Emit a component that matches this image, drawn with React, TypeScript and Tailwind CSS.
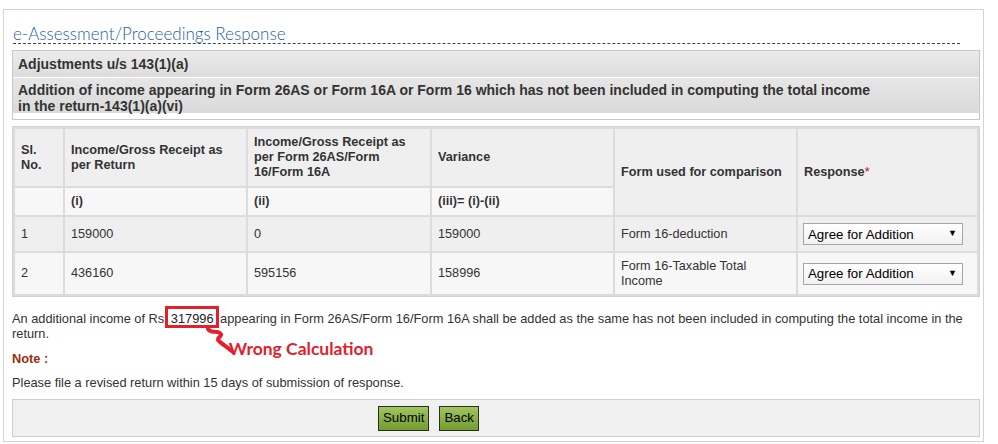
import React from "react";

const th = "px-[6px] align-middle text-left font-bold";
const td = "px-[6px] align-middle";

function ResponseSelect() {
  return (
    <div className="relative h-[22px] w-[160px]">
      <select
        defaultValue="agree"
        className="h-full w-full appearance-none rounded-none border border-[#a5a5a5] bg-linear-to-b from-white to-[#f1f1f1] pl-[4px] text-[13.3px] text-black outline-none"
      >
        <option value="agree">Agree for Addition</option>
        <option value="disagree">Disagree for Addition</option>
      </select>
      <span className="pointer-events-none absolute right-[6px] top-[5px] text-[9px] leading-[10px] text-black">▼</span>
    </div>
  );
}

export default function App() {
  return (
    <div className="font-['Liberation_Sans',Arial,sans-serif] text-[#333]">
      <div className="ml-[3px] mt-[9px] w-[981px] border border-[#d4d4d4] bg-white pb-[4px] pl-[8px] pr-[3px] pt-[15px]">
        <div className="ml-[1px] mr-[20px] border-b border-dashed border-[#444]">
          <h1 className="font-['Lato',sans-serif] text-[17px] font-light leading-[18px] text-[#1d5fa5]">
            e-Assessment/Proceedings Response
          </h1>
        </div>

        <div className="mt-[6px] border border-[#c8c8c8] text-[14px] font-bold text-[#333]">
          <div className="flex h-[27px] items-center border-b border-white bg-linear-to-b from-[#ececec] to-[#dcdcdc] pl-[5px]">
            Adjustments u/s 143(1)(a)
          </div>
          <div className="h-[35px] bg-linear-to-b from-[#e6e6e6] to-[#dadada] pl-[5px] pt-[4px] leading-[16px]">
            Addition of income appearing in Form 26AS or Form 16A or Form 16 which has not been included in computing the total income
            <br />
            in the return-143(1)(a)(vi)
          </div>
          <div className="h-[6px] bg-white" />
        </div>

        <table className="mt-[6px] w-[968px] table-fixed border-separate border-spacing-[2px] border border-[#d2d2d2] bg-[#dcdcdc] text-[12.7px] leading-[15px] text-[#333]">
          <colgroup>
            <col className="w-[48px]" />
            <col className="w-[181px]" />
            <col className="w-[182px]" />
            <col className="w-[181px]" />
            <col className="w-[181px]" />
            <col className="w-[179px]" />
          </colgroup>
          <thead>
            <tr className="h-[57px] bg-[#efefef]">
              <th className={th}>
                Sl.
                <br />
                No.
              </th>
              <th className={th}>Income/Gross Receipt as per Return</th>
              <th className={th}>Income/Gross Receipt as per Form 26AS/Form 16/Form 16A</th>
              <th className={th}>Variance</th>
              <th rowSpan={2} className={th}>
                Form used for comparison
              </th>
              <th rowSpan={2} className={th}>
                Response<span className="font-normal text-[#d0021b]">*</span>
              </th>
            </tr>
            <tr className="h-[27px] bg-[#f7f7f7]">
              <th className={th}></th>
              <th className={th}>(i)</th>
              <th className={th}>(ii)</th>
              <th className={th}>(iii)= (i)-(ii)</th>
            </tr>
          </thead>
          <tbody>
            <tr className="h-[34px] bg-[#efefef]">
              <td className={td}>1</td>
              <td className={td}>159000</td>
              <td className={td}>0</td>
              <td className={td}>159000</td>
              <td className={td}>Form 16-deduction</td>
              <td className="pl-[5px] align-middle">
                <ResponseSelect />
              </td>
            </tr>
            <tr className="h-[41px] bg-[#f7f7f7]">
              <td className={td}>2</td>
              <td className={td}>436160</td>
              <td className={td}>595156</td>
              <td className={td}>158996</td>
              <td className={td}>
                Form 16-Taxable Total
                <br />
                Income
              </td>
              <td className="pl-[5px] align-middle">
                <ResponseSelect />
              </td>
            </tr>
          </tbody>
        </table>

        <p className="mt-[14px] text-[12.8px] leading-[15px] text-[#333]">
          An additional income of Rs{" "}
          <span className="relative ml-[3px] mr-[3px] text-[#222]">
            317996
            <span className="pointer-events-none absolute -left-[6px] -right-[5px] -top-[5px] -bottom-[2px] border-[3px] border-[#e4202c]" />
            <svg
              className="pointer-events-none absolute left-[34px] top-[16px] overflow-visible"
              width="32"
              height="30"
              viewBox="0 0 32 30"
            >
              <path
                d="M3 2 C6 7 11 3 15 6 C19 9 10 11 14 14 C17 17 22 20 28 25"
                fill="none"
                stroke="#e4202c"
                strokeWidth="4"
                strokeLinecap="round"
                strokeLinejoin="round"
              />
            </svg>
            <span className="pointer-events-none absolute left-[58px] top-[28px] whitespace-nowrap font-['Lato',sans-serif] text-[17.5px] font-bold leading-[20px] text-[#e4202c]">
              Wrong Calculation
            </span>
          </span>{" "}
          appearing in Form 26AS/Form 16/Form 16A shall be added as the same has not been included in computing the total income in the
          <br />
          return.
        </p>

        <p className="mt-[10px] text-[12.8px] font-bold leading-[15px] text-[#9c2f0c]">Note :</p>

        <p className="mt-[9px] text-[12.8px] leading-[15px] text-[#333]">
          Please file a revised return within 15 days of submission of response.
        </p>

        <div className="mt-[9px] flex h-[38px] w-[968px] items-center gap-[10px] border border-[#cfcfcf] bg-[#f0f0f0] pl-[365px]">
          <button className="h-[25px] border border-[#2b2b2b] bg-linear-to-b from-[#a0c65c] to-[#729d2e] px-[4px] text-[13.3px] text-black">
            Submit
          </button>
          <button className="h-[25px] border border-[#2b2b2b] bg-linear-to-b from-[#a0c65c] to-[#729d2e] px-[4px] text-[13.3px] text-black">
            Back
          </button>
        </div>
      </div>
    </div>
  );
}
